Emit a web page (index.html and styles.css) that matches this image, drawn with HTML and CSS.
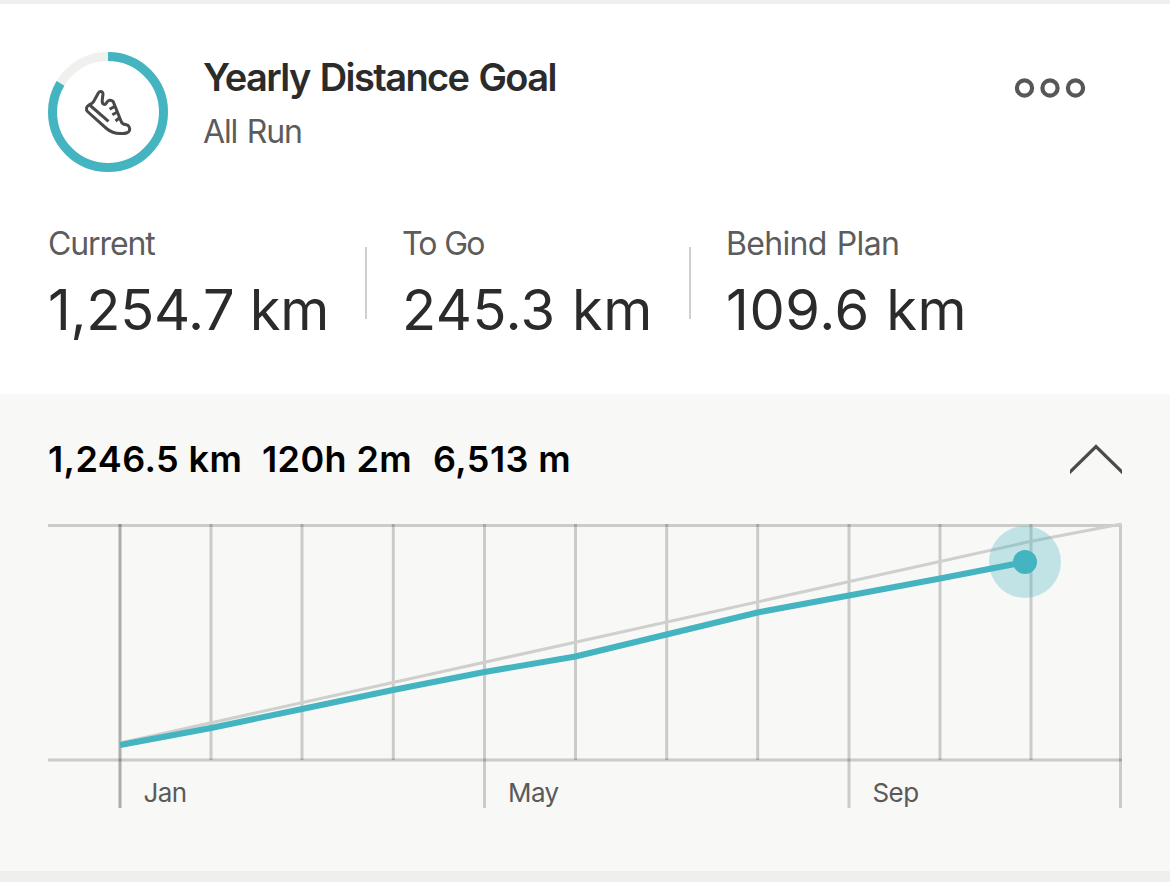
FILE: index.html
```html
<!DOCTYPE html>
<html lang="en">
  <head>
    <meta charset="utf-8">
    <title>Yearly Distance Goal</title>
    <link rel="stylesheet" href="styles.css">
  </head>
  <body>
    <div class="card">
      <div class="top">
        <div class="header">
          <svg class="ring" viewBox="0 0 120 120">
            <circle cx="60" cy="60" r="55.5" class="ring-bg"/>
            <circle cx="60" cy="60" r="55.5" class="ring-bar" pathLength="100" stroke-dasharray="83.65 100" transform="rotate(-90 60 60)"/>
            <g class="shoe">
              <path d="M45.5 49.8L50.2 41.2C51.3 38.5 54.8 39 55 42L54.2 48.5C54 52.3 56.8 53.6 58.4 51C60 47.8 63 47.3 65.2 49.6L73.2 69.5C74 71.8 75.6 72.4 77.6 72.6C81.2 73.2 82.2 76 81.4 78.8C80.4 81.6 77 81.6 72 81.6C67 81.6 62 79.5 58.5 76.5L40 60C37.2 57.4 38.4 54.6 41 53C43 51.8 44.6 51.4 45.5 49.8Z"/>
              <path d="M42.2 53.5L60.5 69.3M67 54.2L61.6 57.3M69.5 60L64.3 62.8M72 65.5L67.5 69"/>
            </g>
          </svg>
          <div class="titles">
            <h1 class="title">Yearly Distance Goal</h1>
            <div class="sub">All Run</div>
          </div>
          <svg class="more" viewBox="0 0 72 20">
            <circle cx="10.5" cy="10" r="7.6"/>
            <circle cx="36" cy="10" r="7.6"/>
            <circle cx="61.5" cy="10" r="7.6"/>
          </svg>
        </div>
        <div class="stats">
          <div class="stat current">
            <div class="label">Current</div>
            <div class="value">1,254.7 km</div>
          </div>
          <div class="stat togo">
            <div class="label">To Go</div>
            <div class="value">245.3 km</div>
          </div>
          <div class="stat behind">
            <div class="label">Behind Plan</div>
            <div class="value">109.6 km</div>
          </div>
        </div>
      </div>
      <div class="detail">
        <div class="summary">
          <span class="distance">1,246.5 km</span>
          <span class="time">120h 2m</span>
          <span class="climb">6,513 m</span>
          <svg class="chevron" viewBox="0 0 52 30">
            <path d="M-2 30L26 2.5L54 30"/>
          </svg>
        </div>
        <svg class="chart" viewBox="48 522 1076 290">
          <path class="grid" d="M48 525.5H1122M48 760H1122"/>
          <path class="grid" d="M211 524V760M302 524V760M393.3 524V760M484.5 524V808M575.5 524V760M666.7 524V760M757.7 524V760M849 524V808M940 524V760M1031 524V760M1120.5 527V808"/>
          <path class="grid start" d="M120 524V808"/>
          <path class="plan" d="M120 743L1031 541.3L1121.5 524"/>
          <circle class="halo" cx="1025" cy="562" r="36"/>
          <path class="actual" d="M120 745L211 728L302 709L393 690L484.5 672L575.5 656.5L666.5 634.5L757.5 612.5L849 595.5L940 578.5L1025 562"/>
          <circle class="dot" cx="1025" cy="562" r="12"/>
          <text class="month" x="143.5" y="802">Jan</text>
          <text class="month" x="508" y="802">May</text>
          <text class="month" x="872.5" y="802">Sep</text>
        </svg>
      </div>
    </div>
  </body>
</html>
```
FILE: styles.css
```css
*{
  margin: 0;
  padding: 0;
  box-sizing: border-box;
}
body{
  height: 882px;
  padding-top: 4px;
  background: #efefee;
  font-family: Inter, "Liberation Sans", sans-serif;
  overflow: hidden;
}
.card{
  height: 867px;
  background: #fff;
}
.top{
  height: 390px;
  padding: 48px 48px 0;
}
.header{
  display: flex;
  height: 120px;
}
.ring{
  width: 120px;
  height: 120px;
  fill: none;
}
.ring-bg{
  stroke: #f0f0ef;
  stroke-width: 9;
}
.ring-bar{
  stroke: #44b4c0;
  stroke-width: 9;
}
.shoe{
  stroke: #494949;
  stroke-width: 3;
  stroke-linejoin: round;
}
.titles{
  flex: 1;
  margin-left: 35px;
}
.title{
  margin-top: 2px;
  font-size: 38px;
  line-height: 46px;
  font-weight: 600;
  letter-spacing: -1.6px;
  word-spacing: 2px;
  color: #2b2b2b;
  white-space: nowrap;
}
.sub{
  margin-top: 12px;
  font-size: 32px;
  line-height: 40px;
  font-weight: 400;
  letter-spacing: -1.2px;
  word-spacing: 2px;
  color: #5c5c5c;
}
.more{
  width: 72px;
  height: 20px;
  margin: 26px 36px 0 0;
  fill: none;
  stroke: #575757;
  stroke-width: 4.2;
}
.stats{
  display: flex;
  margin-top: 52px;
}
.stat{
  position: relative;
  white-space: nowrap;
}
.current{
  width: 354px;
}
.togo{
  width: 324px;
}
.current::after,
.togo::after{
  content: "";
  position: absolute;
  top: 23px;
  right: 35px;
  width: 2px;
  height: 72px;
  background: #cfcfcf;
}
.label{
  font-size: 32px;
  line-height: 40px;
  font-weight: 400;
  letter-spacing: -1.1px;
  color: #5c5c5c;
}
.togo .label{
  letter-spacing: -2px;
  word-spacing: 2px;
}
.behind .label{
  letter-spacing: -.7px;
  word-spacing: 2px;
}
.value{
  margin-top: 12px;
  font-size: 56px;
  line-height: 68px;
  font-weight: 400;
  letter-spacing: -.3px;
  color: #2b2b2b;
}
.togo .value{
  letter-spacing: .5px;
}
.behind .value{
  letter-spacing: .6px;
}
.detail{
  height: 477px;
  padding: 0 46px 0 48px;
  background: #f8f8f7;
}
.summary{
  display: flex;
  height: 128px;
  padding-top: 43px;
  font-size: 36px;
  line-height: 44px;
  font-weight: 600;
  letter-spacing: .4px;
  color: #000;
  white-space: nowrap;
}
.distance{
  width: 214px;
}
.time{
  width: 171px;
}
.chevron{
  width: 52px;
  height: 30px;
  margin: 7px 2px 0 auto;
  fill: none;
  stroke: #4b4b4b;
  stroke-width: 3.2;
}
.chart{
  display: block;
  width: 1076px;
  height: 290px;
}
.grid{
  fill: none;
  stroke: #000;
  stroke-opacity: .18;
  stroke-width: 3;
}
.start{
  stroke-opacity: .3;
}
.plan{
  fill: none;
  stroke: #cfcfce;
  stroke-width: 3;
}
.actual{
  fill: none;
  stroke: #44b4c0;
  stroke-width: 6;
}
.halo{
  fill: #44b4c0;
  fill-opacity: .3;
}
.dot{
  fill: #44b4c0;
}
.month{
  font-size: 26px;
  font-weight: 400;
  letter-spacing: -.6px;
  fill: #5a5a5a;
}
```
